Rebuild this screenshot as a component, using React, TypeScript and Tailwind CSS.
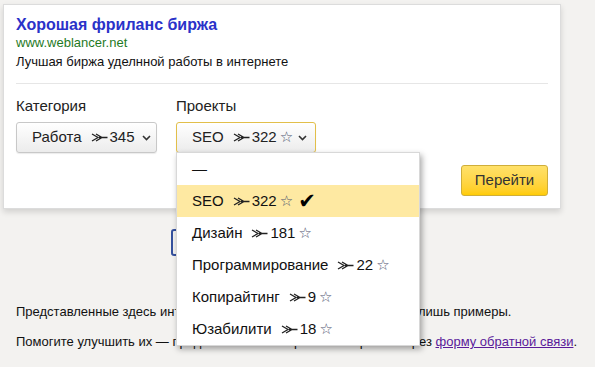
import React from 'react';

const Arrow = () => (
  <svg width="17" height="9" viewBox="0 0 17 9" className="inline-block shrink-0">
    <path d="M1 1 L7 4.5 L1 8 M5 1 L11 4.5 L5 8 M8 4.5 H16.5" fill="none" stroke="#222" strokeWidth="1.3" />
  </svg>
);

const Chevron = () => (
  <svg width="9" height="6" viewBox="0 0 9 6" className="inline-block shrink-0">
    <path d="M1 1 L4.5 4.5 L8 1" fill="none" stroke="#333" strokeWidth="1.6" />
  </svg>
);

const Star = () => <span className="text-[15px] text-[#4f5470] font-['DejaVu_Sans',sans-serif] leading-none">☆</span>;

interface Option {
  id: string;
  label: string;
  count?: number;
  selected?: boolean;
}

const options: Option[] = [
  { id: 'none', label: '—' },
  { id: 'seo', label: 'SEO', count: 322, selected: true },
  { id: 'design', label: 'Дизайн', count: 181 },
  { id: 'prog', label: 'Программирование', count: 22 },
  { id: 'copy', label: 'Копирайтинг', count: 9 },
  { id: 'ux', label: 'Юзабилити', count: 18 },
];

const selectCls =
  'h-[31px] flex items-center rounded-[3px] border bg-gradient-to-b from-white to-[#ececec] text-[15px] text-[#222] shadow-[0_1px_1px_rgba(0,0,0,0.08)]';

export default function App() {
  return (
    <div className="h-screen bg-[#f3f2f0] font-['Liberation_Sans',Arial,sans-serif] text-black overflow-hidden">
      {/* карточка объявления */}
      <div className="ml-[3px] pt-[4px]">
        <div className="w-[558px] bg-white border border-[#dcdcdc] shadow-[0_3px_6px_rgba(0,0,0,0.14)] px-[12px] pt-[10px] pb-[12px]">
          <div className="text-[16px] leading-[20px] font-bold text-[#2a32c9]">Хорошая фриланс биржа</div>
          <div className="text-[13px] leading-[16px] text-[#1f7a1f]">www.weblancer.net</div>
          <div className="mt-[2px] text-[13px] leading-[18px] text-[#111]">Лучшая биржа уделнной работы в интернете</div>
          <div className="mt-[12px] border-t border-[#e6e6e6]" />

          <div className="mt-[13px] flex items-start">
            <div className="w-[160px]">
              <div className="text-[15px] leading-[18px] text-[#222]">Категория</div>
              <div className={`${selectCls} mt-[7px] w-[141px] border-[#c8c8c8] pl-[15px]`}>
                <span>Работа</span>
                <span className="ml-[9px] mr-[2px] flex"><Arrow /></span>
                <span>345</span>
                <span className="ml-[7px] mt-[1px] flex"><Chevron /></span>
              </div>
            </div>

            <div className="relative">
              <div className="text-[15px] leading-[18px] text-[#222]">Проекты</div>
              <div className={`${selectCls} mt-[7px] w-[140px] border-[#e2bf4a] shadow-[0_0_4px_2px_rgba(255,214,60,0.45)] pl-[15px]`}>
                <span>SEO</span>
                <span className="ml-[9px] mr-[2px] flex"><Arrow /></span>
                <span>322</span>
                <span className="ml-[3px]"><Star /></span>
                <span className="ml-[5px] mt-[1px] flex"><Chevron /></span>
              </div>

              {/* выпадающий список */}
              <div className="absolute left-0 top-[55px] z-20 w-[244px] bg-white border border-[#d8d8d8] shadow-[2px_3px_6px_rgba(0,0,0,0.35)]">
                {options.map((o) => (
                  <div
                    key={o.id}
                    className={`h-[32px] flex items-center pl-[15px] text-[15px] text-[#111] ${o.selected ? 'bg-[#fee9a2]' : ''}`}
                  >
                    <span>{o.label}</span>
                    {o.count !== undefined && (
                      <>
                        <span className="ml-[9px] mr-[2px] flex"><Arrow /></span>
                        <span>{o.count}</span>
                        <span className="ml-[3px]"><Star /></span>
                      </>
                    )}
                    {o.selected && (
                      <span className="ml-[5px] text-[21px] leading-none font-['DejaVu_Sans',sans-serif] text-black">✔</span>
                    )}
                  </div>
                ))}
              </div>
            </div>

            <button className="ml-auto mt-[68px] h-[31px] w-[87px] rounded-[3px] border border-[#cfae3a] bg-gradient-to-b from-[#ffe169] to-[#ffcc00] text-[15px] text-[#333]">
              Перейти
            </button>
          </div>
        </div>
      </div>

      <div className="ml-[171px] mt-[20px] h-[27px] w-[110px] rounded-[3px] border-2 border-[#35519e]" />

      <div className="px-[16px] text-[13px] text-[#111] whitespace-nowrap">
        <p className="mt-[47px] leading-[18px]">Представленные здесь интернет-биржи фриланса и их отзывы — лишь примеры.</p>
        <p className="mt-[12px] leading-[18px]">
          Помогите улучшить их — предложите свои варианты и правки через{' '}
          <a href="#" className="text-[#5a1a9a] underline">форму обратной связи</a>.
        </p>
        <p className="mt-[14px] leading-[18px]">
          <a href="#" className="text-[#5a1a9a] underline">Дайте знать нам о других сайтах для фрилансеров</a>
        </p>
      </div>
    </div>
  );
}
